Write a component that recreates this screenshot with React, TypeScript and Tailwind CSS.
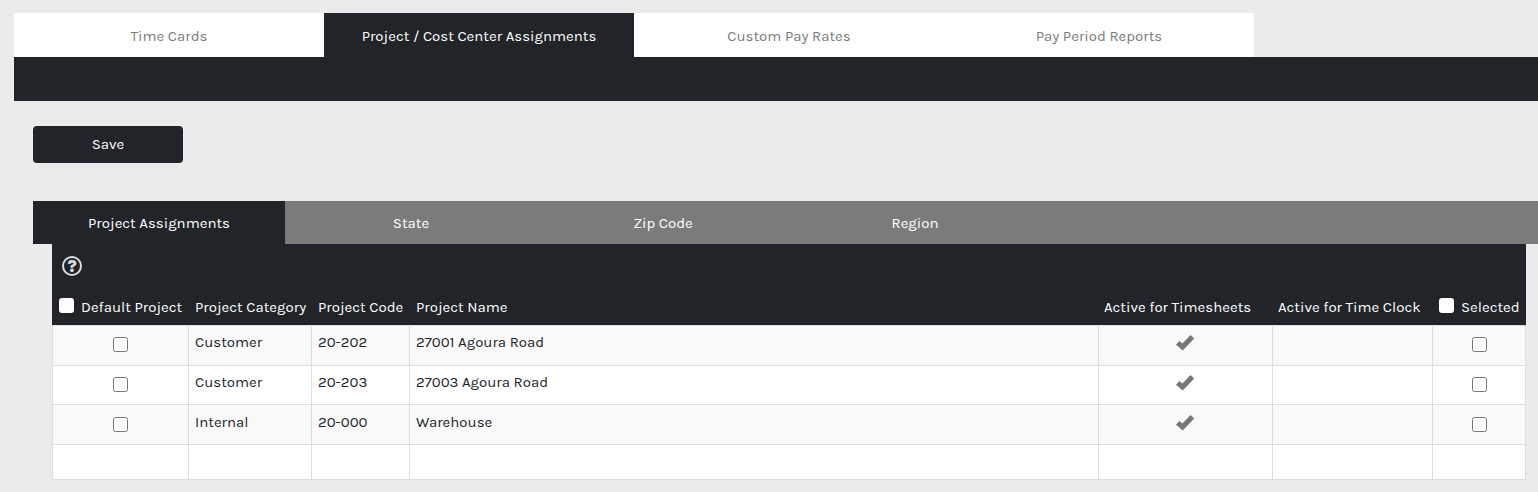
const topTabs = ["Time Cards", "Project / Cost Center Assignments", "Custom Pay Rates", "Pay Period Reports"];
const subTabs = ["Project Assignments", "State", "Zip Code", "Region"];

const rows = [
  { category: "Customer", code: "20-202", name: "27001 Agoura Road", row: "h-[41px] bg-[#f9f9f9]", pad: "pt-0" },
  { category: "Customer", code: "20-203", name: "27003 Agoura Road", row: "h-[39px] bg-white", pad: "pt-0" },
  { category: "Internal", code: "20-000", name: "Warehouse", row: "h-[40px] bg-[#f9f9f9]", pad: "pt-px" },
];

const cell = "border-r border-b border-[#dddddd] align-top";

function CheckMark() {
  return (
    <svg width="20" height="18" viewBox="0 0 20 18" className="mx-auto mt-[8px] -translate-x-px block" fill="none">
      <path d="M2.600 8.800 7.600 13 17.400 2.800" stroke="#777777" strokeWidth="5" />
    </svg>
  );
}

export default function App() {
  return (
    <div className="min-h-[492px] overflow-hidden bg-[#ebebeb] pt-[13px] pl-[14px] font-['Karla','Inter','Liberation_Sans',sans-serif] text-[15px]">
      {/* Top tabs */}
      <div className="flex">
        {topTabs.map((t, i) => (
          <div
            key={t}
            className={`flex h-[44px] w-[310px] items-center justify-center pt-[2px] ${
              i === 1 ? "bg-[#212529] text-white" : "bg-white text-[#7b7b7b]"
            }`}
          >
            {t}
          </div>
        ))}
      </div>
      <div className="h-[44px] bg-[#212529]" />

      <div className="pl-[19px]">
        <button className="mt-[25px] block h-[37px] w-[150px] rounded-[4px] bg-[#212529] text-white">Save</button>

        {/* Sub tabs */}
        <div className="mt-[38px] flex bg-[#7b7b7b]">
          {subTabs.map((t, i) => (
            <div
              key={t}
              className={`flex h-[43px] w-[252px] items-center justify-center pt-[1px] text-white ${
                i === 0 ? "bg-[#212529]" : ""
              }`}
            >
              {t}
            </div>
          ))}
        </div>

        <div className="ml-[19px] w-[1474px]">
          <div className="h-[44px] bg-[#212529] pt-[12px] pl-[10px]">
            <span className="flex h-[20px] w-[20px] items-center justify-center rounded-full border-[2.5px] border-[#dddddd] text-[17px] leading-none font-extrabold text-[#dddddd]">
              ?
            </span>
          </div>
          <table className="w-[1474px] table-fixed border-separate border-spacing-0">
            <colgroup>
              <col className="w-[137px]" />
              <col className="w-[123px]" />
              <col className="w-[98px]" />
              <col className="w-[689px]" />
              <col className="w-[174px]" />
              <col className="w-[160px]" />
              <col className="w-[93px]" />
            </colgroup>
            <thead>
              <tr className="h-[37px] bg-[#212529] text-white">
                <th className="pt-[2px] pl-[7px] text-left font-normal whitespace-nowrap">
                  <span className="flex items-center gap-[7px]">
                    <input type="checkbox" className="mb-[5px] h-[15px] w-[15px] appearance-none rounded-[3px] bg-white" />
                    Default Project
                  </span>
                </th>
                <th className="pt-[2px] pl-[6px] text-left font-normal whitespace-nowrap">Project Category</th>
                <th className="pt-[2px] pl-[6px] text-left font-normal whitespace-nowrap">Project Code</th>
                <th className="pt-[2px] pl-[6px] text-left font-normal">Project Name</th>
                <th className="pt-[2px] pl-[5px] text-left font-normal whitespace-nowrap">Active for Timesheets</th>
                <th className="pt-[2px] pl-[5px] text-left font-normal whitespace-nowrap">Active for Time Clock</th>
                <th className="pt-[2px] pl-[6px] text-left font-normal whitespace-nowrap">
                  <span className="flex items-center gap-[7px]">
                    <input type="checkbox" className="mb-[5px] h-[15px] w-[15px] appearance-none rounded-[3px] bg-white" />
                    Selected
                  </span>
                </th>
              </tr>
            </thead>
            <tbody className="text-[#212529]">
              {rows.map((r, i) => (
                <tr key={r.code} className={r.row}>
                  <td className={`${cell} border-l ${i === 0 ? "border-t" : ""} ${r.pad}`}>
                    <input type="checkbox" className="mx-auto mt-[11px] block h-[15px] w-[15px]" />
                  </td>
                  <td className={`${cell} ${i === 0 ? "border-t" : ""} pl-[6px] ${r.pad}`}>
                    <div className="mt-[5px]">{r.category}</div>
                  </td>
                  <td className={`${cell} ${i === 0 ? "border-t" : ""} pl-[6px] ${r.pad}`}>
                    <div className="mt-[5px]">{r.code}</div>
                  </td>
                  <td className={`${cell} ${i === 0 ? "border-t" : ""} pl-[6px] ${r.pad}`}>
                    <div className="mt-[5px]">{r.name}</div>
                  </td>
                  <td className={`${cell} ${i === 0 ? "border-t" : ""} ${r.pad}`}>
                    <CheckMark />
                  </td>
                  <td className={`${cell} ${i === 0 ? "border-t" : ""}`} />
                  <td className={`${cell} ${i === 0 ? "border-t" : ""} ${r.pad}`}>
                    <input type="checkbox" className="mx-auto mt-[11px] block h-[15px] w-[15px]" />
                  </td>
                </tr>
              ))}
              <tr className="h-[35px] bg-white">
                {[0, 1, 2, 3, 4, 5, 6].map((c) => (
                  <td key={c} className={`${cell} ${c === 0 ? "border-l" : ""}`} />
                ))}
              </tr>
            </tbody>
          </table>
        </div>
      </div>
    </div>
  );
}
